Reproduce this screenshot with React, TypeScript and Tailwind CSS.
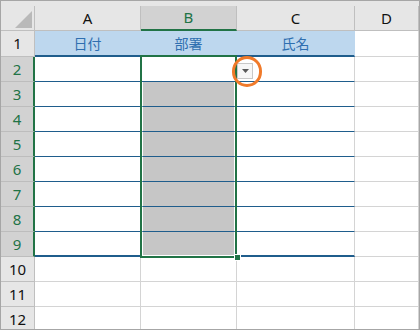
import React from "react";

const COLS = [
  { key: "A", w: "w-[106px]" },
  { key: "B", w: "w-[96px]" },
  { key: "C", w: "w-[118px]" },
  { key: "D", w: "w-[64px]" },
];

const HEAD_TEXT: Record<string, string> = { A: "日付", B: "部署", C: "氏名" };

const FONT = { fontFamily: '"Noto Sans", "Liberation Sans", sans-serif' };
const JP = { fontFamily: '"Noto Sans CJK JP", "Noto Sans", sans-serif' };

function cellClass(r: number, c: string): string {
  if (r === 1) {
    if (c === "D") return "bg-white border-r border-b border-[#d4d4d4]";
    return "bg-[#bdd7ee] border-r border-r-[#bdd7ee] border-b-2 border-b-[#1f5d8c]";
  }
  if (r >= 2 && r <= 9) {
    if (c === "D") return "bg-white border-r border-b border-[#d4d4d4]";
    if (c === "B" && r >= 3) {
      return r === 9
        ? "bg-[#c6c6c6] border-l-2 border-l-white border-r-[3px] border-r-white border-b-2 border-b-white"
        : "bg-[#c6c6c6] border-l-2 border-l-white border-r-[3px] border-r-white border-b border-b-[#1f5d8c]";
    }
    return r === 9
      ? "bg-white border-r border-r-[#d4d4d4] border-b-2 border-b-[#1f5d8c]"
      : "bg-white border-r border-r-[#d4d4d4] border-b border-b-[#1f5d8c]";
  }
  return "bg-white border-r border-b border-[#d4d4d4]";
}

export default function App() {
  const rows = Array.from({ length: 12 }, (_, i) => i + 1);
  return (
    <div className="p-0 m-0">
      <div
        className="relative w-[420px] h-[330px] overflow-hidden border border-[#a6a6a6] bg-white"
        style={FONT}
      >
        {/* top strip */}
        <div className="h-[5px] bg-[#e6e6e6]" />
        {/* column header row */}
        <div className="flex h-[25px]">
          <div className="w-[34px] shrink-0 bg-[#e6e6e6] border-r border-b border-[#bfbfbf] flex items-end justify-end pr-[2px] pb-[2px]">
            <svg width="17" height="17" viewBox="0 0 17 17">
              <polygon points="17,0 17,17 0,17" fill="#b9b9b9" />
            </svg>
          </div>
          {COLS.map((c) => (
            <div
              key={c.key}
              className={
                c.key === "B"
                  ? `${c.w} shrink-0 bg-[#d2d2d2] border-r border-r-[#bfbfbf] border-b-2 border-b-[#217346] text-[#217346] flex items-center justify-center text-[15px]`
                  : `${c.w} shrink-0 bg-[#e6e6e6] border-r border-b border-[#bfbfbf] text-[#111] flex items-center justify-center text-[15px]`
              }
            >
              {c.key}
            </div>
          ))}
        </div>
        {rows.map((r) => {
          const sel = r >= 2 && r <= 9;
          return (
            <div key={r} className={r === 1 ? "flex h-[26px]" : "flex h-[25px]"}>
              <div
                className={
                  sel
                    ? "w-[34px] shrink-0 bg-[#d2d2d2] text-[#217346] border-r-2 border-r-[#217346] border-b border-b-[#bdbdbd] flex items-center justify-center text-[15px]"
                    : "w-[34px] shrink-0 bg-[#e6e6e6] text-[#111] border-r border-b border-[#bfbfbf] flex items-center justify-center text-[15px]"
                }
              >
                {r}
              </div>
              {COLS.map((c) => (
                <div
                  key={c.key}
                  className={`${c.w} shrink-0 ${cellClass(r, c.key)} flex items-center justify-center`}
                >
                  {r === 1 && HEAD_TEXT[c.key] ? (
                    <span className="text-[14px] text-[#2f6fb0]" style={JP}>
                      {HEAD_TEXT[c.key]}
                    </span>
                  ) : null}
                </div>
              ))}
            </div>
          );
        })}

        {/* selection border */}
        <div className="absolute left-[139px] top-[54px] w-[97px] h-[203px] border-2 border-[#217346] pointer-events-none" />
        {/* fill handle */}
        <div className="absolute left-[233px] top-[253px] w-[7px] h-[7px] bg-[#217346] border border-white" />
        {/* dropdown button */}
        <div className="absolute left-[236px] top-[62px] w-[16px] h-[16px] bg-[#f7f7f7] border border-[#c8c8c8] flex items-center justify-center">
          <svg width="7" height="4" viewBox="0 0 7 4">
            <polygon points="0,0 7,0 3.5,4" fill="#595959" />
          </svg>
        </div>
        {/* highlight circle */}
        <div className="absolute left-[231px] top-[55px] w-[30px] h-[31px] rounded-full border-[3px] border-[#f07a2a]" />
      </div>
    </div>
  );
}
